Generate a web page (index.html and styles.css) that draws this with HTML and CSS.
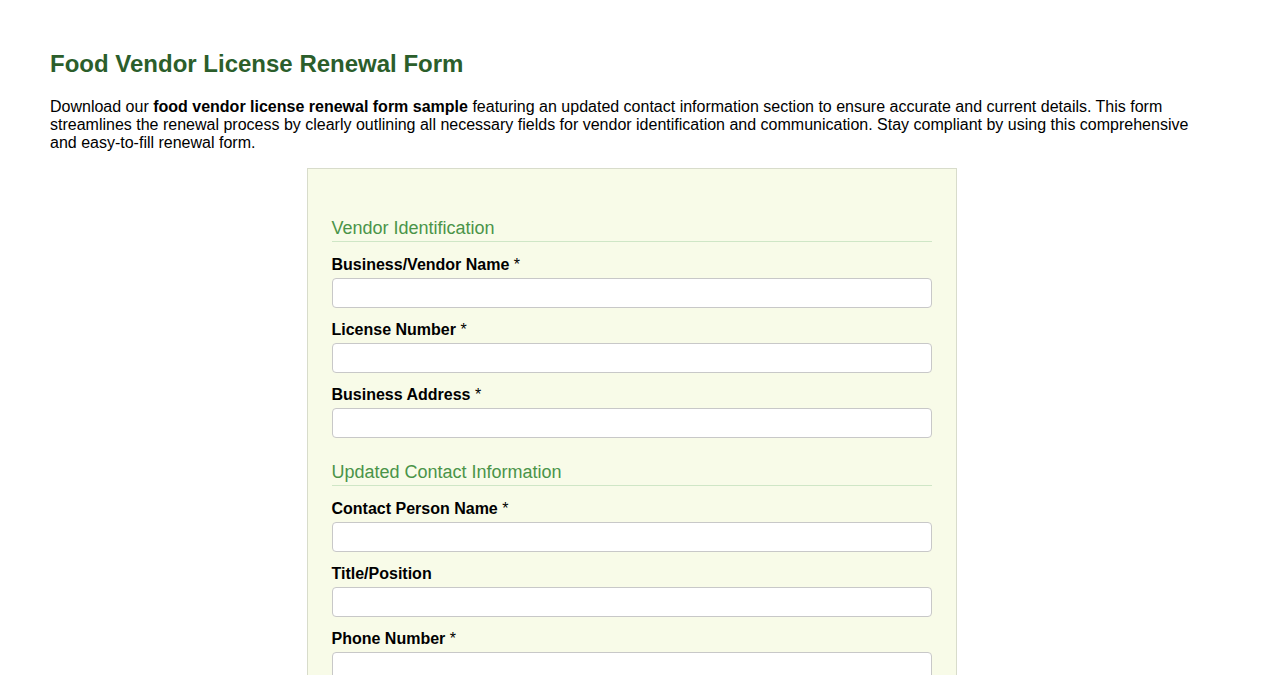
FILE: index.html
```html
<!DOCTYPE html>
<html lang="en">
<head>
<meta charset="utf-8">
<title>Food Vendor License Renewal Form</title>
<link rel="stylesheet" href="styles.css">
</head>
<body>
<div class="page">
  <h1 class="title">Food Vendor License Renewal Form</h1>
  <p class="intro">Download our <strong>food vendor license renewal form sample</strong> featuring an updated contact information section to ensure accurate and current details. This form streamlines the renewal process by clearly outlining all necessary fields for vendor identification and communication. Stay compliant by using this comprehensive and easy-to-fill renewal form.</p>
  <form class="form">
    <h2 class="section-title">Vendor Identification</h2>
    <div class="field">
      <label class="label">Business/Vendor Name <span class="req">*</span></label>
      <input class="input" type="text">
    </div>
    <div class="field">
      <label class="label">License Number <span class="req">*</span></label>
      <input class="input" type="text">
    </div>
    <div class="field">
      <label class="label">Business Address <span class="req">*</span></label>
      <input class="input" type="text">
    </div>
    <h2 class="section-title">Updated Contact Information</h2>
    <div class="field">
      <label class="label">Contact Person Name <span class="req">*</span></label>
      <input class="input" type="text">
    </div>
    <div class="field">
      <label class="label">Title/Position</label>
      <input class="input" type="text">
    </div>
    <div class="field">
      <label class="label">Phone Number <span class="req">*</span></label>
      <input class="input" type="text">
    </div>
    <div class="field">
      <label class="label">Email Address <span class="req">*</span></label>
      <input class="input" type="text">
    </div>
  </form>
</div>
</body>
</html>
```
FILE: styles.css
```css
html, body {
  margin: 0;
  padding: 0;
  background: #ffffff;
}
body {
  font-family: "Liberation Sans", Arial, sans-serif;
  color: #000;
}
.page {
  padding: 50px 50px 40px;
}
.title {
  margin: 0 0 20px;
  font-size: 24px;
  font-weight: bold;
  color: #2b5e2b;
  line-height: 28px;
}
.intro {
  margin: 0 0 16px;
  font-size: 16px;
  line-height: 18px;
}
.form {
  width: 650px;
  box-sizing: border-box;
  margin: 0 auto;
  background: #f8fbe8;
  border: 1px solid #d8dccb;
  padding: 25px 24px 24px;
}
.section-title {
  margin: 23px 0 13px;
  padding: 1px 0 2px;
  font-size: 18px;
  font-weight: normal;
  line-height: 21px;
  color: #4a9448;
  border-bottom: 1px solid #cfe6c6;
}
.field {
  display: flex;
  flex-direction: column;
  gap: 4px;
  margin-bottom: 12px;
}
.label {
  margin-top: 1px;
  font-size: 16px;
  font-weight: bold;
  line-height: 18px;
}
.req {
  font-weight: normal;
}
.input {
  display: block;
  width: 100%;
  height: 30px;
  box-sizing: border-box;
  margin: 0;
  border: 1px solid #c8c8c8;
  border-radius: 4px;
  background: #fff;
  font-family: inherit;
  font-size: 14px;
  padding: 4px 8px;
}
```
